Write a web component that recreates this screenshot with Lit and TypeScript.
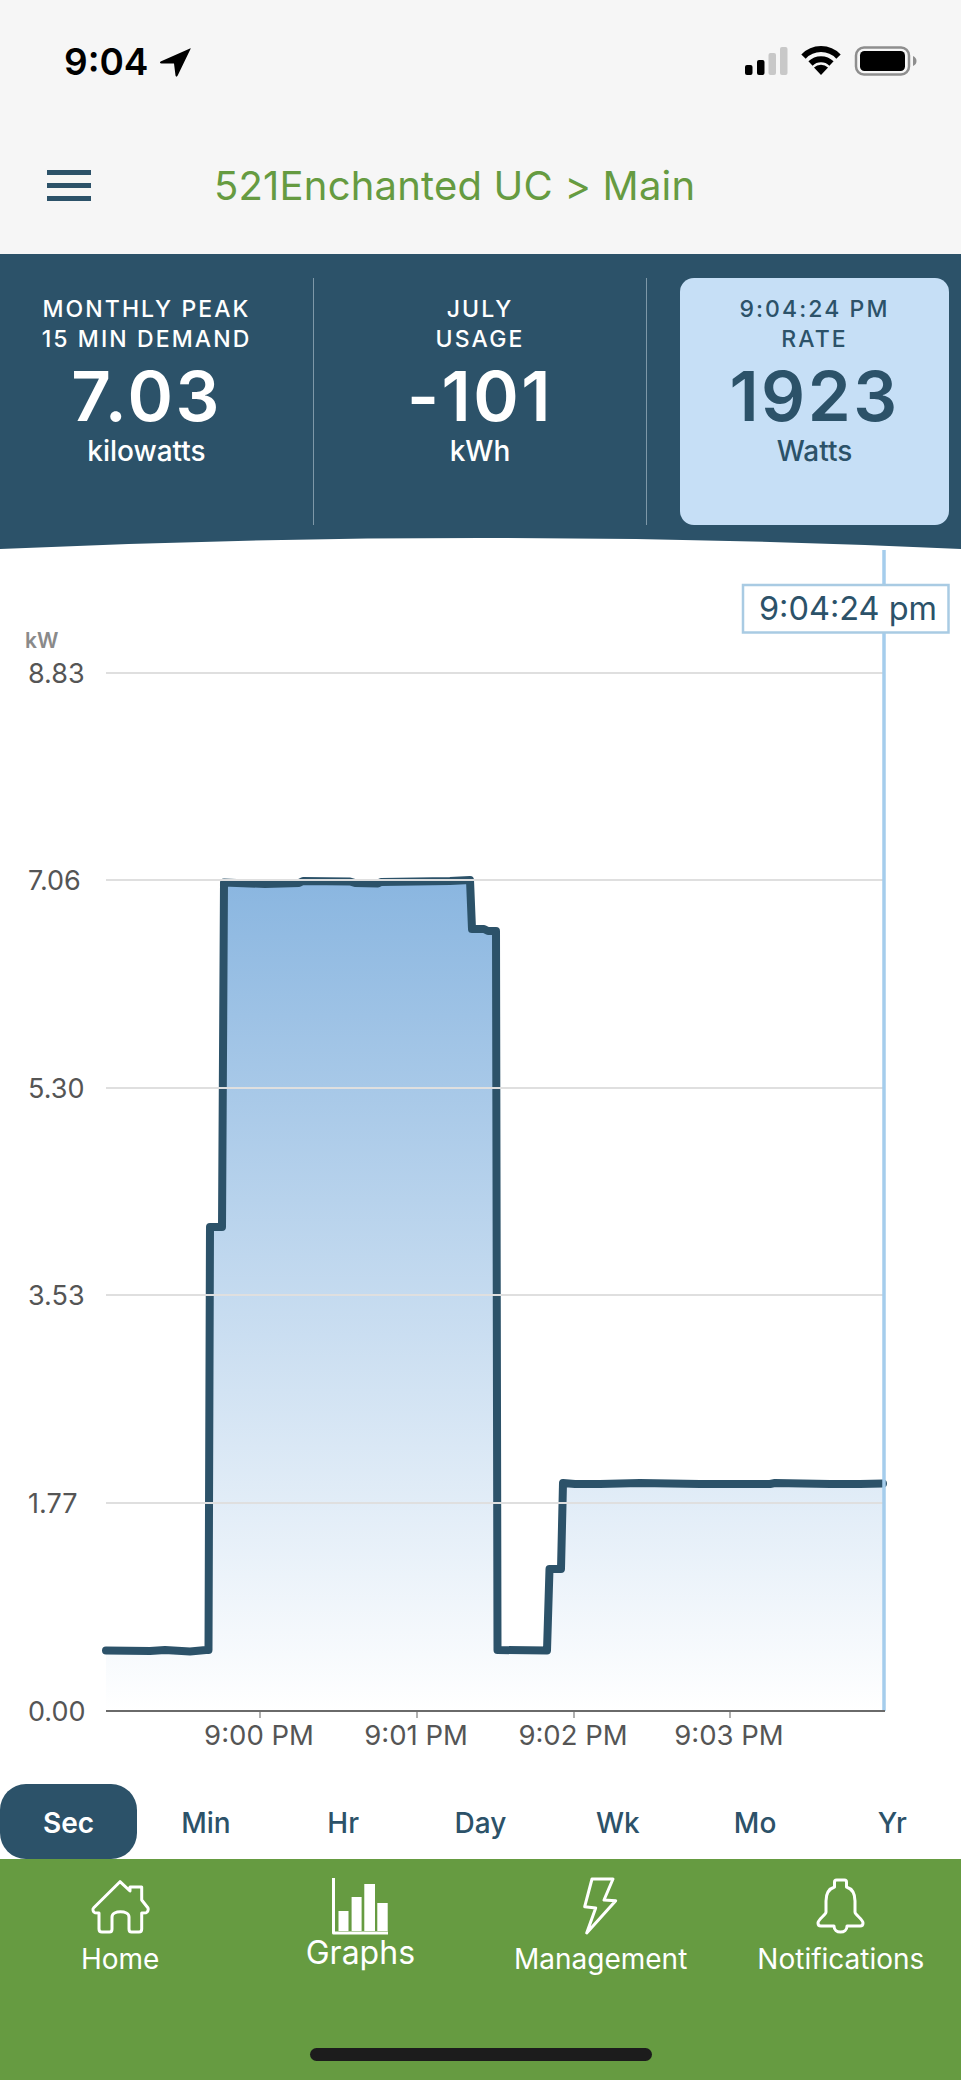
import { LitElement, html, css, svg } from "lit";
import { customElement } from "lit/decorators.js";

const STATS = [
  { a: "MONTHLY PEAK", b: "15 MIN DEMAND", v: "7.03", u: "kilowatts", cls: "s1" },
  { a: "JULY", b: "USAGE", v: "-101", u: "kWh", cls: "s2" },
  { a: "9:04:24 PM", b: "RATE", v: "1923", u: "Watts", cls: "s3" },
];
const TABS = ["Sec", "Min", "Hr", "Day", "Wk", "Mo", "Yr"];
const TOP = 549;
const GRID = [
  { y: 673, t: "8.83" },
  { y: 880, t: "7.06" },
  { y: 1088, t: "5.30" },
  { y: 1295, t: "3.53" },
  { y: 1503, t: "1.77" },
];
const TICKS = [
  { x: 260, t: "9:00 PM" },
  { x: 417, t: "9:01 PM" },
  { x: 574, t: "9:02 PM" },
  { x: 730, t: "9:03 PM" },
];
const POINTS: [number, number][] = [
  [106, 1650.5], [150, 1651], [165, 1650], [190, 1651.5], [206, 1650], [208.5, 1650], [210, 1227], [222, 1227], [224, 882.5],
  [265, 884], [299, 883], [303, 881], [350, 881.5], [355, 883], [378, 883.5], [381, 882], [450, 881], [470, 880],
  [472, 929], [484, 929], [488, 931], [496, 931], [497.5, 1650], [547, 1650.5], [549.5, 1569], [561, 1569], [563, 1483],
  [575, 1484], [600, 1484], [640, 1483], [700, 1484], [770, 1484], [775, 1483], [830, 1484], [860, 1484], [883, 1483.5],
];
const line = POINTS.map((p) => `${p[0]},${p[1] - TOP}`).join(" ");
const area = `106,${1711 - TOP} ${line} 883,${1711 - TOP}`;

const homeIcon = svg`<svg class="ni home" width="57" height="54" viewBox="-1 -1 57 54"><path d="M37 10V6H48.7V19L55 27C55.6 28 54.8 31.500 53 31.800L48.700 32V48C48.700 50 47.500 51 46 51H38.500C37 51 36 50 36 48V36C36 29 19 29 19 36V48C19 50 18 51 16.500 51H9C7 51 6 50 6 48V32L2 31.800C0 31.500 -.6 28 .5 27L27 .7Z"/></svg>`;
const graphIcon = svg`<svg class="ni graph" width="56" height="57" viewBox="0 0 56 57"><path class="thin" d="M1.500 0V55H56"/><path class="solid" d="M6.500 33H16.500V53H6.500ZM19.600 19H29.600V53H19.600ZM32.300 6H43V53H32.300ZM45.300 25H55.700V53H45.300Z"/></svg>`;
const boltIcon = svg`<svg class="ni bolt" width="33" height="57" viewBox="0 0 33 57"><path d="M8 1H29L20 22L31.700 22.700L2.700 55L11.700 30L.7 28.700Z"/></svg>`;
const bellIcon = svg`<svg class="ni bell" width="47" height="55" viewBox="-1 0 47 55"><path d="M16.500 8V3A2 2 0 0 1 18.500 1H26.500A2 2 0 0 1 28.500 3V8C35 10 37 15 37 22V33C37 36 45 40 45 44C45 46 44 47 42 47H29C29 51 26 53 22.500 53C19 53 16 51 16 47H3C1 47 0 46 0 44C0 40 8 36 8 33V22C8 15 10 10 16.500 8Z"/></svg>`;
const NAV = [
  { label: "Home", icon: homeIcon, cls: "" },
  { label: "Graphs", icon: graphIcon, cls: "big" },
  { label: "Management", icon: boltIcon, cls: "" },
  { label: "Notifications", icon: bellIcon, cls: "" },
];

@customElement("app-root")
export class AppRoot extends LitElement {
  static styles = css`
    :host {
      display: flex;
      flex-direction: column;
      width: 961px;
      height: 2080px;
      overflow: hidden;
      background: #fff;
      font-family: Inter, "Liberation Sans", sans-serif;
      color: #2c5269;
    }
    .status {
      height: 110px;
      flex: none;
      background: #f6f6f6;
      display: flex;
      justify-content: space-between;
      align-items: flex-start;
      padding: 42px 44px 0 64px;
      box-sizing: border-box;
    }
    .clock {
      display: flex;
      align-items: flex-start;
      gap: 11px;
      font-size: 37px;
      font-weight: 600;
      line-height: 40px;
      color: #000;
    }
    .clock svg {
      margin-top: 5px;
    }
    .sys {
      margin-top: 4px;
      display: block;
    }
    .head {
      height: 144px;
      flex: none;
      background: #f6f6f6;
      display: flex;
      align-items: flex-start;
      padding: 60px 0 0 47px;
      box-sizing: border-box;
    }
    .burger {
      width: 44px;
      display: flex;
      flex-direction: column;
      gap: 8px;
    }
    .burger i {
      height: 5px;
      display: block;
      background: #2c5269;
    }
    .title {
      margin-left: 123px;
      font-size: 40px;
      line-height: 50px;
      margin-top: -9px;
      color: #669b41;
      letter-spacing: 0.2px;
      white-space: nowrap;
    }
    .band {
      height: 295px;
      flex: none;
      background: #2c5269;
      display: flex;
      flex-direction: column;
      justify-content: space-between;
      padding-top: 24px;
      box-sizing: border-box;
    }
    .curve {
      display: block;
    }
    .stats {
      height: 247px;
      display: grid;
      grid-template-columns: 314px 333px 314px;
    }
    .stat {
      text-align: center;
      color: #fff;
      box-sizing: border-box;
      padding-top: 16px;
    }
    .s1 {
      padding-right: 20px;
      border-right: 1px solid #7e98a8;
    }
    .s2 {
      border-right: 1px solid #7e98a8;
    }
    .s3 {
      margin-left: 33px;
      margin-right: 12px;
      background: #c6dff6;
      border-radius: 14px;
      color: #2c5269;
    }
    .lab {
      font-size: 23px;
      line-height: 30px;
      font-weight: 500;
      letter-spacing: 2.1px;
      white-space: nowrap;
    }
    .val {
      font-size: 69px;
      line-height: 72px;
      font-weight: 600;
      letter-spacing: 2.5px;
      margin-top: 6px;
    }
    .unit {
      font-size: 28px;
      line-height: 36px;
      font-weight: 500;
      margin-top: 1px;
    }
    .chart {
      height: 1235px;
      flex: none;
      display: block;
    }
    .fill {
      fill: url(#g);
    }
    .ln {
      fill: none;
      stroke: #2c5269;
      stroke-width: 8;
      stroke-linejoin: round;
      stroke-linecap: round;
    }
    .gl {
      stroke: #dfdfdf;
      stroke-width: 2;
    }
    .ax {
      stroke: #6a6a6a;
      stroke-width: 2;
    }
    .tk {
      stroke: #b0b0b0;
      stroke-width: 2;
    }
    .cur {
      stroke: #a5cdec;
      stroke-width: 3.500;
    }
    .box {
      fill: #fff;
      stroke: #a9cbe3;
      stroke-width: 2.500;
    }
    .boxt {
      font-size: 32.500px;
      fill: #2c5269;
      text-anchor: middle;
    }
    .yl {
      font-size: 27px;
      fill: #555;
    }
    .xl {
      font-size: 27.500px;
      fill: #555;
      text-anchor: middle;
    }
    .kw {
      font-size: 21px;
      font-weight: 600;
      fill: #8a8a8a;
    }
    .tabs {
      height: 75px;
      flex: none;
      display: grid;
      grid-template-columns: repeat(7, 1fr);
    }
    .tab {
      display: flex;
      align-items: center;
      justify-content: center;
      font-size: 28px;
      font-weight: 500;
      color: #2c5269;
      padding-top: 2px;
      box-sizing: border-box;
    }
    .tab.on {
      background: #2c5269;
      color: #fff;
      font-weight: 600;
      border-radius: 26px;
    }
    .nav {
      height: 221px;
      flex: none;
      background: #669b41;
      display: flex;
      flex-direction: column;
      align-items: center;
      justify-content: space-between;
      padding: 19px 0 19px;
      box-sizing: border-box;
    }
    .items {
      align-self: stretch;
      display: grid;
      grid-template-columns: repeat(4, 240.250px);
    }
    .item {
      display: flex;
      flex-direction: column;
      align-items: center;
      color: #fff;
      font-size: 28px;
      line-height: 36px;
      white-space: nowrap;
    }
    .item.big {
      font-size: 32px;
    }
    .icon {
      height: 57px;
      display: flex;
      align-items: center;
      justify-content: center;
      margin-bottom: 6px;
    }
    .big .icon {
      margin-bottom: 0;
    }
    .ni {
      display: block;
      overflow: visible;
    }
    .ni path {
      fill: none;
      stroke: #fff;
      stroke-width: 3;
      stroke-linejoin: round;
    }
    .ni path.solid {
      fill: #fff;
      stroke: none;
    }
    .homebar {
      width: 342px;
      height: 13px;
      border-radius: 7px;
      background: #1c1c1c;
    }
  `;

  render() {
    return html`
      <div class="status">
        <div class="clock">
          <span>9:04</span>
          <svg width="31" height="30" viewBox="0 0 31 30"><path d="M30 1.500L.6 14.500C-.6 15.500 0 16.500 1.500 16.500L14 16.500L15.500 28.500C15.800 30 17 30 17.700 28.500L30.500 2C30.800 1 30.500 1 30 1.500Z" /></svg>
        </div>
        <svg class="sys" width="172" height="32" viewBox="745 46 172 32">
          <rect x="745" y="65" width="7.500" height="10" rx="2" fill="#000" />
          <rect x="757" y="60" width="7.500" height="15" rx="2" fill="#000" />
          <rect x="768.500" y="53" width="7.500" height="22" rx="2" fill="#c8c8c8" />
          <rect x="780" y="47" width="7.500" height="28" rx="2" fill="#c8c8c8" />
          <path d="M803.500 56.600A24 24 0 0 1 838.500 56.600M810.500 63.500A15 15 0 0 1 831.500 63.500" fill="none" stroke="#000" stroke-width="6" />
          <path d="M821 75L814 67.500A10 10 0 0 1 828 67.500Z" fill="#000" />
          <rect x="856" y="47.500" width="53" height="27" rx="8" fill="none" stroke="#8e8e8e" stroke-width="2.500" />
          <rect x="860" y="51" width="45" height="20" rx="4.500" fill="#000" />
          <path d="M913 56C915.500 57 916.500 59 916.500 61C916.500 63 915.500 65 913 66Z" fill="#8e8e8e" />
        </svg>
      </div>
      <div class="head">
        <div class="burger"><i></i><i></i><i></i></div>
        <div class="title">521Enchanted UC &gt; Main</div>
      </div>
      <div class="band">
        <div class="stats">
          ${STATS.map(
            (s) => html`<div class="stat ${s.cls}">
              <div class="lab">${s.a}</div>
              <div class="lab">${s.b}</div>
              <div class="val">${s.v}</div>
              <div class="unit">${s.u}</div>
            </div>`
          )}
        </div>
        <svg class="curve" width="961" height="11" viewBox="0 0 961 11"><path d="M0 11Q480.500 -11 961 11Z" fill="#fff" /></svg>
      </div>
      <svg class="chart" width="961" height="1235" viewBox="0 0 961 1235">
        <defs>
          <linearGradient id="g" x1="0" y1="0" x2="0" y2="1">
            <stop offset="0" stop-color="#8ab6e0" />
            <stop offset="1" stop-color="#ffffff" />
          </linearGradient>
        </defs>
        <polygon class="fill" points=${area} />
        <polyline class="ln" points=${line} />
        ${GRID.map(
          (g) => svg`
            <line class="gl" x1="106" x2="885" y1=${g.y - TOP} y2=${g.y - TOP} />
            <text class="yl" x="28" y=${g.y - TOP + 10}>${g.t}</text>`
        )}
        <text class="kw" x="25" y=${648 - TOP}>kW</text>
        <text class="yl" x="28" y=${1711 - TOP + 10}>0.00</text>
        <line class="cur" x1="884" x2="884" y1="1" y2=${1711 - TOP} />
        <line class="ax" x1="106" x2="885" y1=${1711 - TOP} y2=${1711 - TOP} />
        ${TICKS.map(
          (t) => svg`
            <line class="tk" x1=${t.x} x2=${t.x} y1=${1712 - TOP} y2=${1718 - TOP} />
            <text class="xl" x=${t.x - 1} y=${1745 - TOP}>${t.t}</text>`
        )}
        <rect class="box" x="743" y=${585 - TOP} width="205.500" height="47.500" />
        <text class="boxt" x="848" y=${620 - TOP}>9:04:24 pm</text>
      </svg>
      <div class="tabs">
        ${TABS.map((t, i) => html`<div class="tab ${i === 0 ? "on" : ""}">${t}</div>`)}
      </div>
      <div class="nav">
        <div class="items">
          ${NAV.map(
            (n) => html`<div class="item ${n.cls}">
              <div class="icon">${n.icon}</div>
              <div>${n.label}</div>
            </div>`
          )}
        </div>
        <div class="homebar"></div>
      </div>
    `;
  }
}
